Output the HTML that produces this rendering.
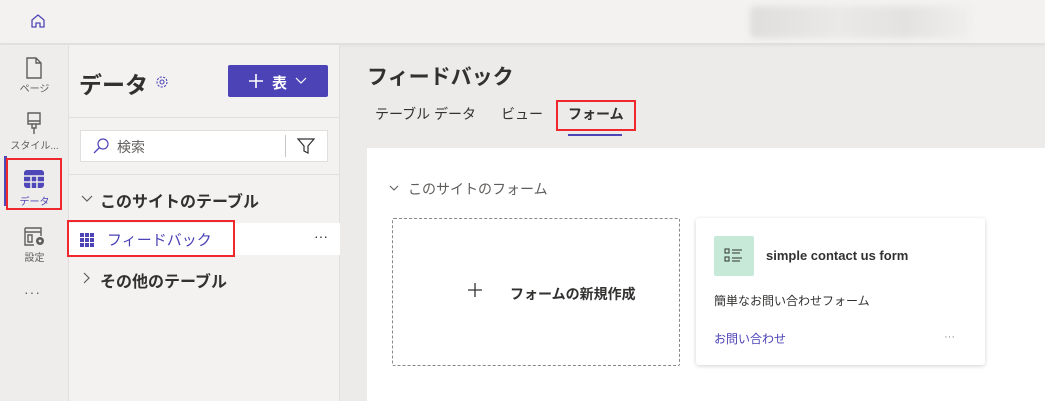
<!DOCTYPE html>
<html><head><meta charset="utf-8"><style>
*{margin:0;padding:0;box-sizing:border-box}
body{width:1045px;height:401px;overflow:hidden;background:#edebe9;font-family:"Liberation Sans","Noto Sans CJK JP",sans-serif;position:relative;color:#323130}
.abs{position:absolute}
.top{left:0;top:0;width:1045px;height:44px;background:#f3f2f1;border-bottom:1px solid #e1dfdd;box-shadow:0 1px 3px rgba(0,0,0,.08)}
.rail{left:0;top:45px;width:69px;height:356px;background:#eeedec;border-right:1px solid #e1dfdd}
.panel{left:69px;top:45px;width:271px;height:356px;background:#f3f2f1;border-right:1px solid #e1dfdd}
.lbl{font-size:10px;color:#605e5c;text-align:center;width:69px;left:0}
.red{border:2px solid #f0282d}
</style></head><body>
<div class="abs top"></div>
<svg class="abs" style="left:30px;top:13px" width="16" height="16" viewBox="0 0 16 16"><path d="M2 7L8 2l6 5v7h-4v-4H6v4H2z" fill="none" stroke="#4f46b8" stroke-width="1.3" stroke-linejoin="round"/></svg>
<div class="abs" style="left:750px;top:6px;width:222px;height:32px;background:linear-gradient(90deg,#e0dedc,#ebe9e7 40%,#e4e2e0 70%,#f0efee);filter:blur(3px);border-radius:6px"></div>

<div class="abs rail"></div>
<svg class="abs" style="left:24px;top:57px" width="20" height="22" viewBox="0 0 20 22"><path d="M3 1h9l5 5v15H3z M12 1v5h5" fill="none" stroke="#605e5c" stroke-width="1.4"/></svg>
<div class="abs lbl" style="top:80px">ページ</div>
<svg class="abs" style="left:25px;top:112px" width="18" height="24" viewBox="0 0 18 24"><path d="M3 1h12v11H3z M3 9h12 M7 12v4h4v-4 M9 16v6" fill="none" stroke="#605e5c" stroke-width="1.4"/></svg>
<div class="abs lbl" style="top:137px">スタイル...</div>
<div class="abs" style="left:4px;top:156px;width:3px;height:50px;background:#4f46b8"></div>
<div class="abs red" style="left:6px;top:158px;width:56px;height:52px"></div>
<svg class="abs" style="left:24px;top:170px" width="20" height="18" viewBox="0 0 20 18"><rect x="0" y="0" width="20" height="18" rx="3" fill="#4f46b8"/><path d="M0 6h20M0 12h20M7 6v12M13 6v12" stroke="#eeedec" stroke-width="1.5"/></svg>
<div class="abs lbl" style="top:193px;color:#4f46b8">データ</div>
<svg class="abs" style="left:24px;top:227px" width="22" height="20" viewBox="0 0 22 20"><path d="M1 1h16v8 M1 1v17h9 M1 5h16 M4 8h4v7H4z" fill="none" stroke="#605e5c" stroke-width="1.4"/><circle cx="16" cy="14" r="4" fill="#605e5c"/><circle cx="16" cy="14" r="1.4" fill="#eeedec"/></svg>
<div class="abs lbl" style="top:249px">設定</div>
<div class="abs" style="left:24px;top:284px;font-size:14px;color:#605e5c;letter-spacing:1px">···</div>

<div class="abs panel"></div>
<div class="abs" style="left:79px;top:66px;font-size:23px;font-weight:bold;color:#323130">データ</div>
<svg class="abs" style="left:155px;top:75px" width="14" height="14" viewBox="0 0 14 14"><circle cx="7" cy="7" r="2" fill="none" stroke="#4f46b8" stroke-width="1.1"/><circle cx="7" cy="7" r="5" fill="none" stroke="#4f46b8" stroke-width="1.1" stroke-dasharray="2.2 1.3"/></svg>
<div class="abs" style="left:228px;top:65px;width:100px;height:32px;background:#4b43b6;border-radius:2px"></div>
<svg class="abs" style="left:248px;top:73px" width="16" height="16" viewBox="0 0 16 16"><path d="M8 1v14M1 8h14" stroke="#fff" stroke-width="1.6"/></svg>
<div class="abs" style="left:272px;top:72px;font-size:15px;font-weight:bold;color:#fff">表</div>
<svg class="abs" style="left:295px;top:77px" width="12" height="8" viewBox="0 0 12 8"><path d="M1 1l5 5 5-5" fill="none" stroke="#fff" stroke-width="1.2"/></svg>
<div class="abs" style="left:69px;top:117px;width:271px;height:1px;background:#e1dfdd"></div>
<div class="abs" style="left:80px;top:130px;width:248px;height:32px;background:#fff;border:1px solid #e1dfdd"></div>
<svg class="abs" style="left:92px;top:137px" width="18" height="18" viewBox="0 0 18 18"><circle cx="11" cy="7" r="5" fill="none" stroke="#4f46b8" stroke-width="1.2"/><path d="M7.5 10.5L2 16" stroke="#4f46b8" stroke-width="1.3"/></svg>
<div class="abs" style="left:117px;top:137px;font-size:14px;color:#605e5c">検索</div>
<div class="abs" style="left:285px;top:135px;width:1px;height:22px;background:#c8c6c4"></div>
<svg class="abs" style="left:297px;top:138px" width="18" height="16" viewBox="0 0 18 16"><path d="M1 1h16l-6 7v7l-4-2V8z" fill="none" stroke="#323130" stroke-width="1.2"/></svg>
<div class="abs" style="left:69px;top:174px;width:271px;height:1px;background:#e1dfdd"></div>
<svg class="abs" style="left:81px;top:195px" width="12" height="8" viewBox="0 0 12 8"><path d="M1 1l5 5 5-5" fill="none" stroke="#605e5c" stroke-width="1.2"/></svg>
<div class="abs" style="left:100px;top:188px;font-size:16px;font-weight:bold">このサイトのテーブル</div>
<div class="abs" style="left:69px;top:223px;width:271px;height:32px;background:#fff"></div>
<svg class="abs" style="left:80px;top:233px" width="14" height="14" viewBox="0 0 14 14"><g fill="#4b43b6"><rect x="0" y="0" width="4" height="4"/><rect x="5" y="0" width="4" height="4"/><rect x="10" y="0" width="4" height="4"/><rect x="0" y="5" width="4" height="4"/><rect x="5" y="5" width="4" height="4"/><rect x="10" y="5" width="4" height="4"/><rect x="0" y="10" width="4" height="4"/><rect x="5" y="10" width="4" height="4"/><rect x="10" y="10" width="4" height="4"/></g></svg>
<div class="abs" style="left:107px;top:229px;font-size:15px;color:#4b43b6">フィードバック</div>
<div class="abs red" style="left:67px;top:220px;width:168px;height:37px"></div>
<div class="abs" style="left:314px;top:228px;font-size:14px;color:#323130">···</div>
<svg class="abs" style="left:83px;top:272px" width="8" height="12" viewBox="0 0 8 12"><path d="M1 1l5 5-5 5" fill="none" stroke="#605e5c" stroke-width="1.2"/></svg>
<div class="abs" style="left:100px;top:268px;font-size:16px;font-weight:bold">その他のテーブル</div>

<div class="abs" style="left:367px;top:61px;font-size:21px;font-weight:bold">フィードバック</div>
<div class="abs" style="left:375px;top:104px;font-size:14px;color:#323130">テーブル データ</div>
<div class="abs" style="left:501px;top:104px;font-size:14px;color:#323130">ビュー</div>
<div class="abs" style="left:568px;top:104px;font-size:14px;font-weight:bold">フォーム</div>
<div class="abs red" style="left:556px;top:100px;width:80px;height:31px"></div>
<div class="abs" style="left:568px;top:134px;width:54px;height:2px;background:#4b43b6"></div>

<div class="abs" style="left:367px;top:148px;width:678px;height:253px;background:#fff"></div>
<svg class="abs" style="left:389px;top:185px" width="10" height="7" viewBox="0 0 10 7"><path d="M1 1l4 4 4-4" fill="none" stroke="#605e5c" stroke-width="1.1"/></svg>
<div class="abs" style="left:408px;top:179px;font-size:14px;color:#605e5c">このサイトのフォーム</div>
<div class="abs" style="left:392px;top:218px;width:288px;height:148px;border:1px dashed #8a8886;border-radius:2px"></div>
<svg class="abs" style="left:467px;top:282px" width="16" height="16" viewBox="0 0 16 16"><path d="M8 1v14M1 8h14" stroke="#323130" stroke-width="1.3"/></svg>
<div class="abs" style="left:510px;top:284px;font-size:14px;font-weight:bold">フォームの新規作成</div>
<div class="abs" style="left:696px;top:218px;width:289px;height:147px;background:#fff;border-radius:3px;box-shadow:0 1px 4px rgba(0,0,0,.18)"></div>
<div class="abs" style="left:714px;top:236px;width:40px;height:40px;background:#c6e9d8;border-radius:2px"></div>
<svg class="abs" style="left:724px;top:248px" width="20" height="16" viewBox="0 0 20 16"><rect x="1" y="1" width="4" height="4" fill="none" stroke="#323130"/><rect x="1" y="9" width="4" height="4" fill="none" stroke="#323130"/><path d="M8 2h10M8 5h8M8 10h10M8 13h8" stroke="#323130"/></svg>
<div class="abs" style="left:766px;top:248px;font-size:13px;font-weight:bold">simple contact us form</div>
<div class="abs" style="left:714px;top:292px;font-size:12px">簡単なお問い合わせフォーム</div>
<div class="abs" style="left:714px;top:330px;font-size:12px;color:#4b43b6">お問い合わせ</div>
<div class="abs" style="left:944px;top:331px;font-size:11px;color:#8a8886">···</div>
</body></html>
